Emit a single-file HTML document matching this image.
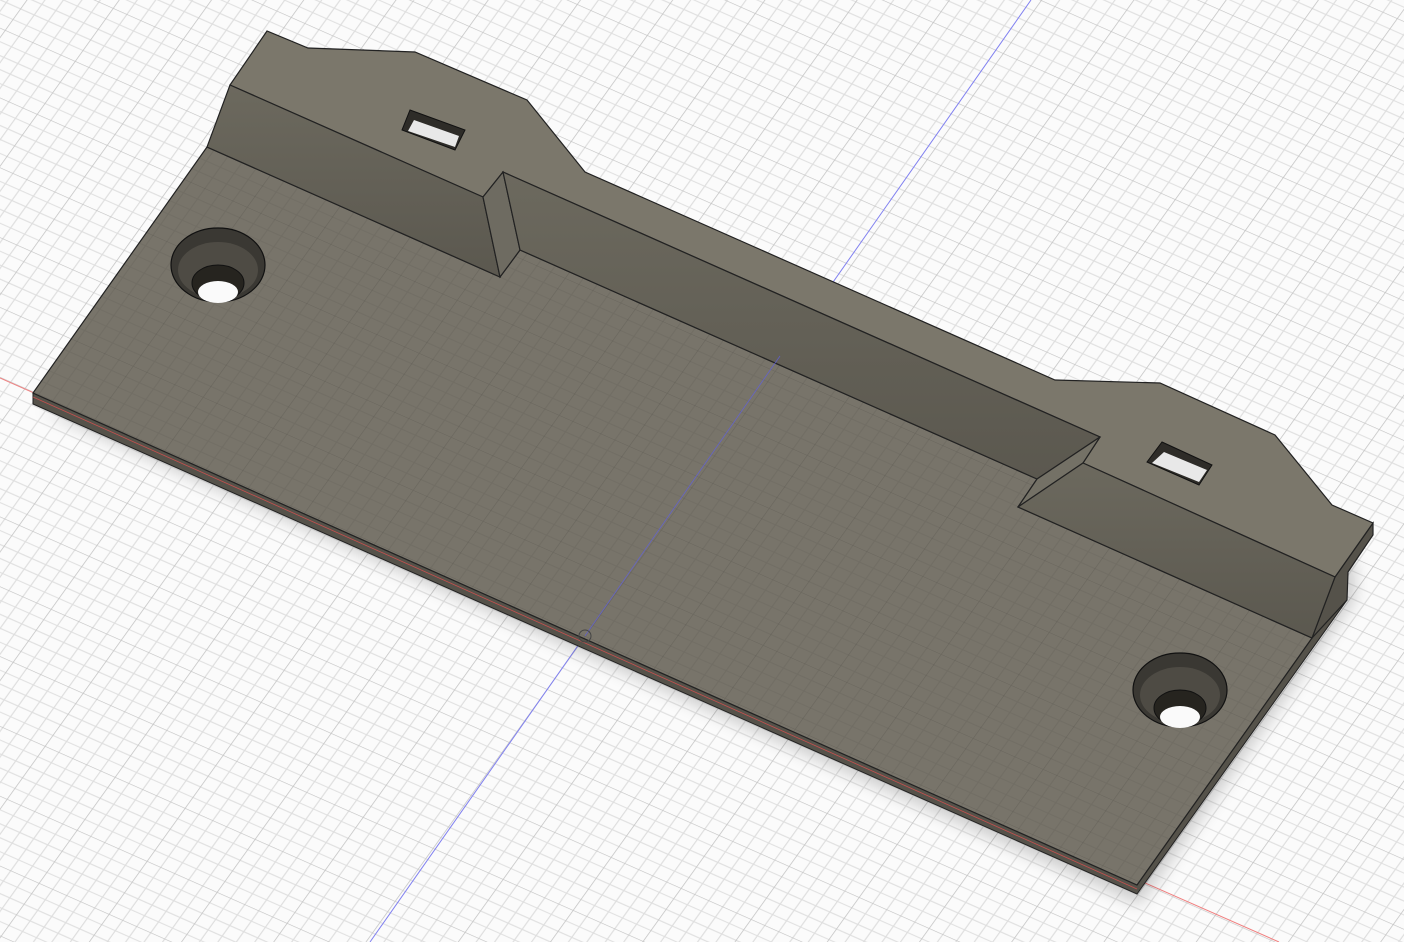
<!DOCTYPE html>
<html><head><meta charset="utf-8"><style>html,body{margin:0;padding:0;background:#fbfbfb;overflow:hidden;width:1404px;height:942px}svg{display:block}</style></head>
<body>
<svg width="1404" height="942" viewBox="0 0 1404 942" xmlns="http://www.w3.org/2000/svg">
<defs>
<pattern id="g" width="70" height="70" patternUnits="userSpaceOnUse" patternTransform="matrix(1,0.443,-0.543,0.757,585,636)">
<path d="M14 0V70M28 0V70M42 0V70M56 0V70M0 14H70M0 28H70M0 42H70M0 56H70" stroke="#dedede" stroke-width="1.1" fill="none"/>
<path d="M0 0V70M0 0H70" stroke="#c2c2c2" stroke-width="1.4" fill="none"/>
</pattern>
<pattern id="g2" width="70" height="70" patternUnits="userSpaceOnUse" patternTransform="matrix(1,0.443,-0.543,0.757,585,636)">
<path d="M14 0V70M28 0V70M42 0V70M56 0V70M0 14H70M0 28H70M0 42H70M0 56H70" stroke="#000" stroke-opacity="0.06" stroke-width="1" fill="none"/>
<path d="M0 0V70M0 0H70" stroke="#000" stroke-opacity="0.12" stroke-width="1.2" fill="none"/>
</pattern>
<linearGradient id="fr" x1="0" y1="0" x2="0" y2="1"><stop offset="0" stop-color="#6c695e"/><stop offset="1" stop-color="#5b584f"/></linearGradient>
<filter id="sh"><feGaussianBlur stdDeviation="8"/></filter>
<clipPath id="c"><rect width="1404" height="942"/></clipPath>
</defs>
<g clip-path="url(#c)">
<rect width="1404" height="942" fill="#fbfbfb"/>
<rect width="1404" height="942" fill="url(#g)"/>
<line x1="0" y1="378" x2="1279" y2="942" stroke="#f08080" stroke-width="1"/>
<line x1="1031" y1="0" x2="370" y2="942" stroke="#8080f0" stroke-width="1"/>
<polygon points="40,410 1140,905 1355,600 1355,560" fill="#000" opacity="0.18" filter="url(#sh)"/>
<polygon points="33,393 33,404 1137,894 1347,600 1347,580 1312,638 1137,885" fill="#55524a" stroke="#222" stroke-width="1"/>
<polygon points="33,393 207,147 500,277 520,250 1037,479 1018,507 1312,638 1137,885" fill="#78746a" stroke="#222" stroke-width="1.2"/>
<polygon points="33,393 207,147 500,277 520,250 1037,479 1018,507 1312,638 1137,885" fill="url(#g2)"/>
<polygon points="1373,523 1373,535 1348,572 1347,600 1312,638 1335,577" fill="#55524a" stroke="#222" stroke-width="1.2"/>
<polygon points="230,85 267,31 308,48 415,52 527,100 585,172 1055,380 1160,383 1275,435 1332,505 1373,523 1335,577 1083,463 1100,437 503,172 483,197" fill="#7b776b" stroke="#222" stroke-width="1.2"/>
<polygon points="230,85 483,197 500,277 207,147" fill="url(#fr)" stroke="#222" stroke-width="1.2"/>
<polygon points="483,197 503,172 520,250 500,277" fill="#6e6b61" stroke="#222" stroke-width="1.2"/>
<polygon points="503,172 1100,437 1037,479 520,250" fill="url(#fr)" stroke="#222" stroke-width="1.2"/>
<polygon points="1100,437 1083,463 1018,507 1037,479" fill="#747166" stroke="#222" stroke-width="1.2"/>
<polygon points="1083,463 1335,577 1312,638 1018,507" fill="url(#fr)" stroke="#222" stroke-width="1.2"/>
<polygon points="410,110 465,130 455,150 402,130" fill="#2e2c28" stroke="#111"/>
<polygon points="414,120 459,136 455,147 408,131" fill="#e8e8e8"/>
<polygon points="1162,442 1212,465 1199,485 1147,462" fill="#2e2c28" stroke="#111"/>
<polygon points="1164,452 1207,470 1199,482 1152,463" fill="#e8e8e8"/>
<ellipse cx="218" cy="265" rx="47" ry="37" fill="#3a3833" stroke="#111" stroke-width="1.2"/>
<ellipse cx="218" cy="270" rx="40" ry="28" fill="#4e4b44"/>
<ellipse cx="218" cy="283" rx="26" ry="18" fill="#26241f" stroke="#111"/>
<ellipse cx="218" cy="292" rx="20" ry="11" fill="#fafafa"/>
<ellipse cx="1180" cy="690" rx="47" ry="37" fill="#3a3833" stroke="#111" stroke-width="1.2"/>
<ellipse cx="1180" cy="695" rx="40" ry="28" fill="#4e4b44"/>
<ellipse cx="1180" cy="708" rx="26" ry="18" fill="#26241f" stroke="#111"/>
<ellipse cx="1180" cy="717" rx="20" ry="11" fill="#fafafa"/>
<line x1="33" y1="397" x2="1137" y2="889" stroke="#e05050" stroke-width="0.8" opacity="0.8"/>
<line x1="780" y1="356" x2="585" y2="636" stroke="#6060e0" stroke-width="0.8" opacity="0.8"/>
<circle cx="585" cy="636" r="6" fill="none" stroke="#444" stroke-width="1"/>
</g>
</svg>
</body></html>
